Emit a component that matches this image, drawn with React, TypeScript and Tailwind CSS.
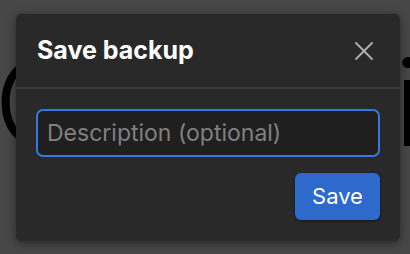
import { X } from "lucide-react";

function Backdrop() {
  return (
    <div className="h-[254px] w-[410px] overflow-hidden bg-white">
      <div className="flex justify-between pt-[43px] text-[120px] leading-none font-light text-black font-['Inter',sans-serif]">
        <span className="-ml-[6px]">C</span>
        <span className="-mr-[12px]">i</span>
      </div>
    </div>
  );
}

function SaveBackupDialog() {
  return (
    <div className="w-[384px] rounded-[5px] bg-[#292929] shadow-[0_2px_10px_rgba(0,0,0,0.45)]">
      <div className="flex h-[73px] items-center justify-between pl-[21px] pr-[20px]">
        <h2 className="text-[25px] font-bold text-white">Save backup</h2>
        <button className="-mr-[1px] flex h-[34px] w-[34px] items-center justify-center text-[#b0b0b0]">
          <X size={32} strokeWidth={1.35} />
        </button>
      </div>
      <div className="h-[2px] bg-[#3c3c3c]" />
      <div className="flex flex-col items-end px-[20px] pt-[20px] pb-[21px]">
        <input
          type="text"
          placeholder="Description (optional)"
          className="h-[48px] w-full rounded-[7px] border-2 border-[#3379e3] bg-[#1f1f1f] px-[9px] text-[23px] text-white outline-none placeholder:text-[#808080]"
        />
        <button className="mt-[16px] h-[47px] w-[85px] rounded-[6px] bg-[#2d6acb] text-[22px] text-white shadow-[0_1px_3px_rgba(0,0,0,0.5)]">
          Save
        </button>
      </div>
    </div>
  );
}

export default function App() {
  return (
    <div className="relative h-[254px] w-[410px] overflow-hidden font-['Inter',sans-serif]">
      <Backdrop />
      <div className="absolute inset-0 flex items-start bg-black/[0.72] pl-[16px] pt-[14px]">
        <SaveBackupDialog />
      </div>
    </div>
  );
}
